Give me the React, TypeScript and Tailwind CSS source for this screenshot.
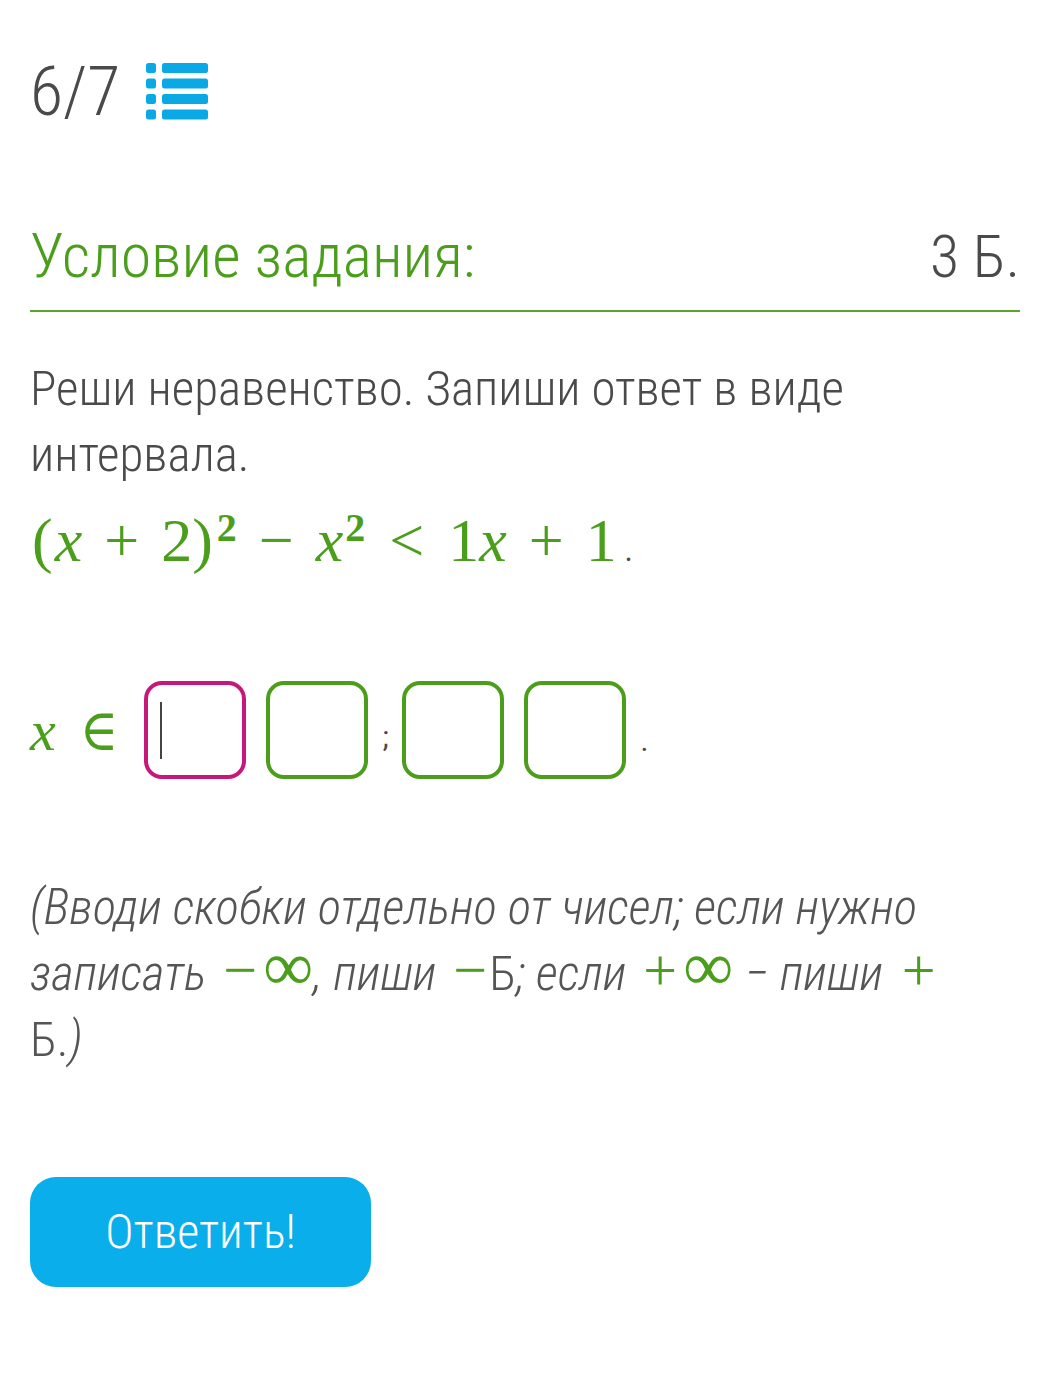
import React from "react";

const green = "text-[#4b9e1b]";
const serif = { fontFamily: "'Liberation Serif', 'DejaVu Serif', serif" };

function ListIcon() {
  return (
    <svg width="62" height="58" viewBox="0 0 62 58" className="fill-[#0aa9e6]">
      {[0, 1, 2, 3].map((i) => (
        <g key={i}>
          <rect x="0" y={i * 15.5} width="10" height="10" rx="2.5" />
          <rect x="16" y={i * 15.5} width="46" height="10" rx="2.5" />
        </g>
      ))}
    </svg>
  );
}

function Box({ active }: { active?: boolean }) {
  return (
    <div
      className={`flex h-[98px] w-[102px] items-center rounded-[18px] border-[4px] ${
        active ? "border-[#c8177a]" : "border-[#4b9e1b]"
      }`}
    >
      {active && <div className="ml-[12px] h-[57px] w-[2px] bg-[#444]" />}
    </div>
  );
}

function M({ children, className = "" }: { children: React.ReactNode; className?: string }) {
  return (
    <span className={`not-italic leading-[0px] ${green} ${className}`} style={serif}>
      {children}
    </span>
  );
}

export default function App() {
  return (
    <div
      className="min-h-[1398px] w-[1064px] bg-white pl-[30px] pr-[44px] text-[#4a4a4a] font-stretch-condensed"
      style={{ fontFamily: "'Roboto Condensed', 'Liberation Sans Narrow', Roboto, sans-serif" }}
    >
      <div className="flex items-center gap-[26px] pt-[58px]">
        <span className="text-[68px] font-light leading-none">6/7</span>
        <ListIcon />
      </div>

      <div className="mt-[90px] flex items-baseline justify-between border-b-2 border-[#5aa62a] pb-[13px]">
        <span className={`text-[62px] font-light leading-[80px] ${green}`}>Условие задания:</span>
        <span className="text-[60px] font-light leading-[80px]">3 Б.</span>
      </div>

      <p className="mt-[44px] text-[49px] font-light leading-[66px]">
        Реши неравенство. Запиши ответ в виде интервала.
      </p>
      <div className={`mt-[10px] text-[62px] leading-[84px] ${green}`} style={serif}>
        <span className="ml-[2px]">(</span>
        <i className="ml-[2px]">x</i>
        <span className="mx-[22px]">+</span>2)
        <sup className="ml-[4px] text-[40px] font-semibold">2</sup>
        <span className="mx-[22px]">−</span>
        <i>x</i>
        <sup className="ml-[2px] text-[40px] font-semibold">2</sup>
        <span className="mx-[24px]">&lt;</span>1<i>x</i>
        <span className="mx-[22px]">+</span>1
        <span className="ml-[8px] text-[30px] text-[#4a4a4a]">.</span>
      </div>

      <div className="mt-[88px] flex items-center">
        <span className={`mr-[26px] text-[58px] ${green}`} style={serif}>
          <i>x</i>
          <span className="ml-[24px]" style={{ fontFamily: "'DejaVu Serif', serif" }}>
            ∈
          </span>
        </span>
        <Box active />
        <div className="w-[20px]" />
        <Box />
        <span className="mx-[14px] mt-[12px] text-[30px]">;</span>
        <Box />
        <div className="w-[20px]" />
        <Box />
        <span className="ml-[14px] mt-[20px] text-[30px]">.</span>
      </div>

      <p className="mt-[96px] text-[49px] font-light italic leading-[66px] text-[#555]">
        (Вводи скобки отдельно от чисел; если нужно записать{" "}
        <M className="ml-[6px] text-[60px]">−</M>
        <M className="ml-[6px] text-[70px]">∞</M>, пиши <M className="ml-[6px] text-[60px]">−</M>
        <span className="ml-[2px] not-italic">Б</span>; если <M className="ml-[6px] text-[60px]">+</M>
        <M className="ml-[6px] text-[70px]">∞</M>
        <span className="ml-[12px]">− пиши</span> <M className="ml-[8px] text-[60px]">+</M>
        <br />
        <span className="not-italic">Б.</span>)
      </p>

      <button className="mt-[104px] h-[110px] w-[341px] rounded-[26px] bg-[#0aaeea] text-[48px] font-light text-white">
        Ответить!
      </button>
    </div>
  );
}
